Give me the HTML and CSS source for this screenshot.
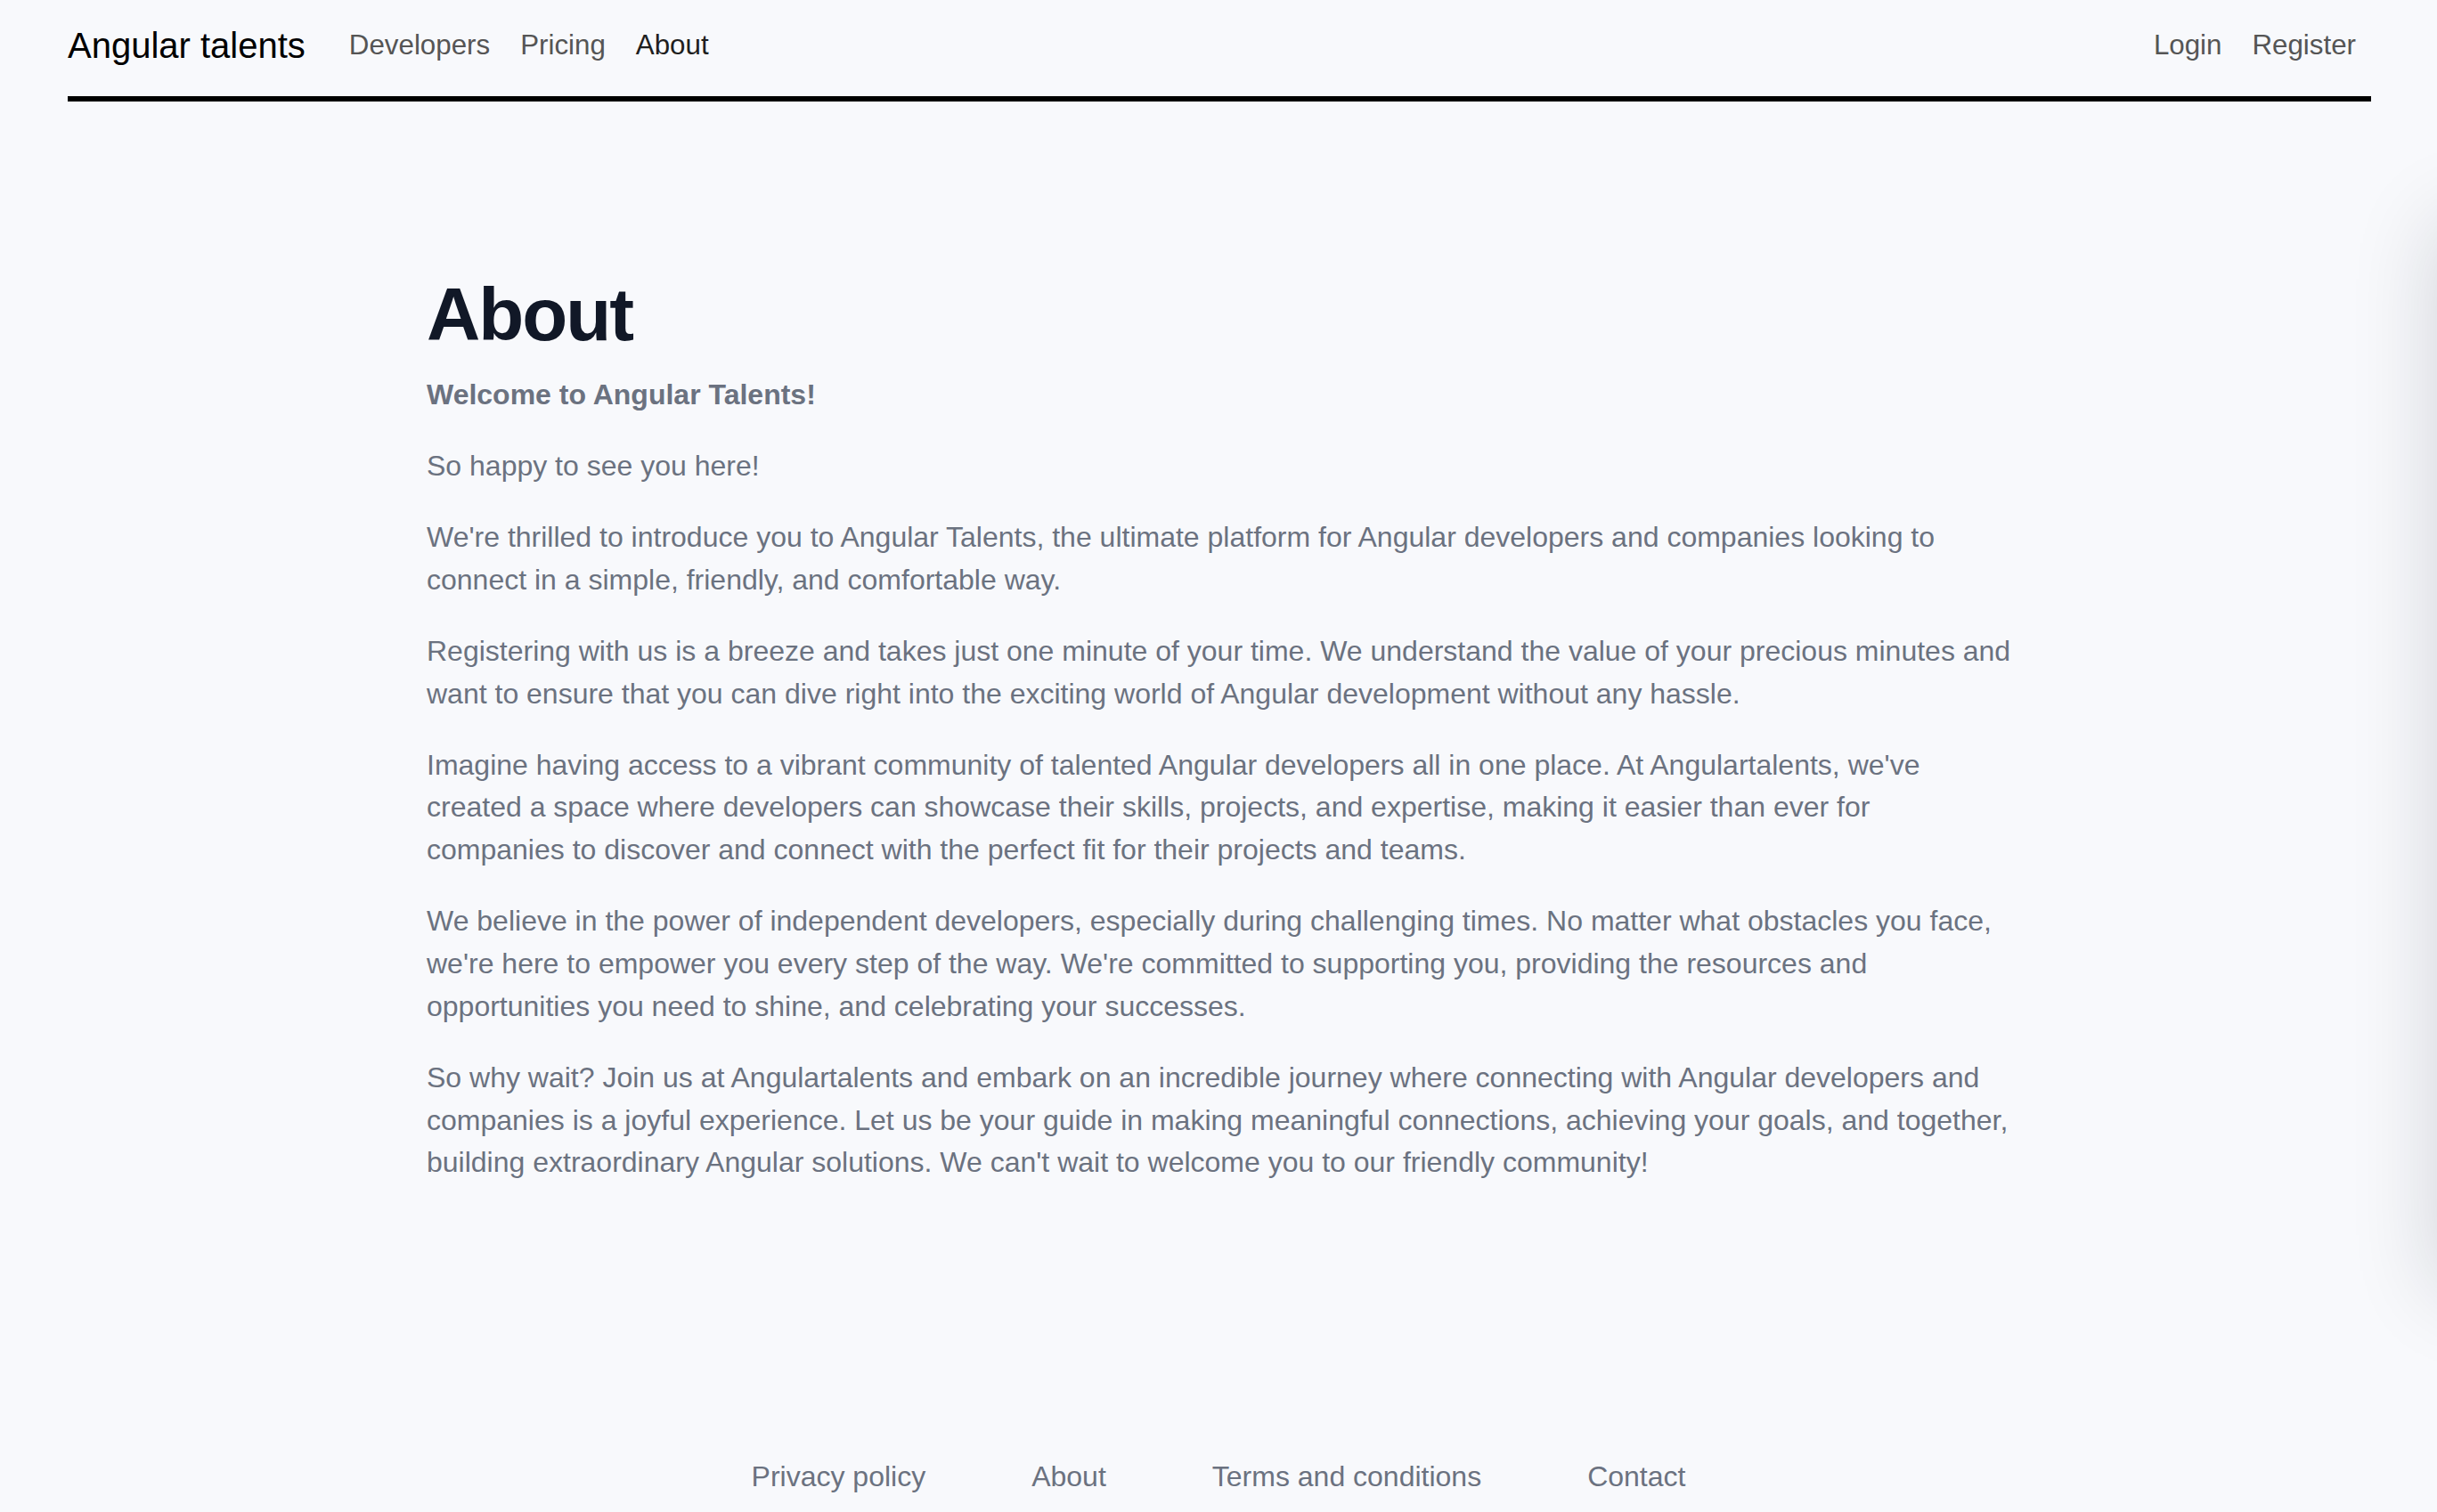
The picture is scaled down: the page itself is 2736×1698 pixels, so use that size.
FILE: index.html
```html
<!DOCTYPE html>
<html lang="en">
<head>
<meta charset="utf-8">
<title>About - Angular talents</title>
<link rel="stylesheet" href="styles.css">
</head>
<body>
<div class="page">
  <header class="topbar">
    <a class="logo" href="#">Angular talents</a>
    <nav class="nav-main">
      <a class="nav-link" href="#">Developers</a>
      <a class="nav-link" href="#">Pricing</a>
      <a class="nav-link active" href="#">About</a>
    </nav>
    <nav class="nav-auth">
      <a class="nav-link" href="#">Login</a>
      <a class="nav-link" href="#">Register</a>
    </nav>
  </header>

  <main class="content">
    <h1 class="title">About</h1>
    <p class="lead">Welcome to Angular Talents!</p>
    <p class="text">So happy to see you here!</p>
    <p class="text">We're thrilled to introduce you to Angular Talents, the ultimate platform for Angular developers and companies looking to connect in a simple, friendly, and comfortable way.</p>
    <p class="text">Registering with us is a breeze and takes just one minute of your time. We understand the value of your precious minutes and want to ensure that you can dive right into the exciting world of Angular development without any hassle.</p>
    <p class="text">Imagine having access to a vibrant community of talented Angular developers all in one place. At Angulartalents, we've created a space where developers can showcase their skills, projects, and expertise, making it easier than ever for companies to discover and connect with the perfect fit for their projects and teams.</p>
    <p class="text">We believe in the power of independent developers, especially during challenging times. No matter what obstacles you face, we're here to empower you every step of the way. We're committed to supporting you, providing the resources and opportunities you need to shine, and celebrating your successes.</p>
    <p class="text">So why wait? Join us at Angulartalents and embark on an incredible journey where connecting with Angular developers and companies is a joyful experience. Let us be your guide in making meaningful connections, achieving your goals, and together, building extraordinary Angular solutions. We can't wait to welcome you to our friendly community!</p>
  </main>

  <footer class="footer">
    <a class="footer-link" href="#">Privacy policy</a>
    <a class="footer-link" href="#">About</a>
    <a class="footer-link" href="#">Terms and conditions</a>
    <a class="footer-link" href="#">Contact</a>
  </footer>
</div>
<div class="drawer" aria-hidden="true"></div>
</body>
</html>
```

FILE: styles.css
```css
html, body {
  margin: 0;
  padding: 0;
}

body {
  background: #f8f9fc;
  font-family: "Liberation Sans", Arial, Helvetica, sans-serif;
  color: #6b7280;
  overflow: hidden;
}

a {
  text-decoration: none;
  color: inherit;
}

.page {
  min-height: 1698px;
}

.topbar {
  display: flex;
  align-items: center;
  margin: 0 74px 0 76px;
  padding: 28px 0 34px;
  border-bottom: 6px solid #000;
}

.logo {
  font-size: 40px;
  line-height: 46px;
  color: #000;
  margin-right: 32px;
}

.nav-main {
  display: flex;
  flex: 1;
}

.nav-auth {
  display: flex;
}

.nav-link {
  font-size: 31.3px;
  line-height: 36px;
  padding: 0 17px;
  color: #555555;
}

.nav-link.active {
  color: #1f1f1f;
}

.content {
  box-sizing: border-box;
  width: 1788px;
  margin: 0 auto;
  padding: 198px 0 0 5px;
}

.title {
  margin: 0 0 24px;
  font-size: 83.5px;
  line-height: 1;
  font-weight: 700;
  letter-spacing: -2px;
  color: #111827;
}

.lead {
  margin: 0;
  font-size: 32px;
  line-height: 47.7px;
  font-weight: 700;
  color: #6b7280;
}

.text {
  margin: 32.5px 0 0;
  font-size: 32px;
  line-height: 47.7px;
  color: #6b7280;
}

.footer {
  display: flex;
  justify-content: center;
  gap: 119px;
  margin-top: 305px;
}

.footer-link {
  font-size: 32px;
  line-height: 47.7px;
  color: #6b7280;
}

.drawer {
  position: fixed;
  top: 250px;
  left: 100%;
  width: 400px;
  height: 1200px;
  background: #ffffff;
  box-shadow: 0 0 90px rgba(17, 24, 39, 0.16);
}
```
